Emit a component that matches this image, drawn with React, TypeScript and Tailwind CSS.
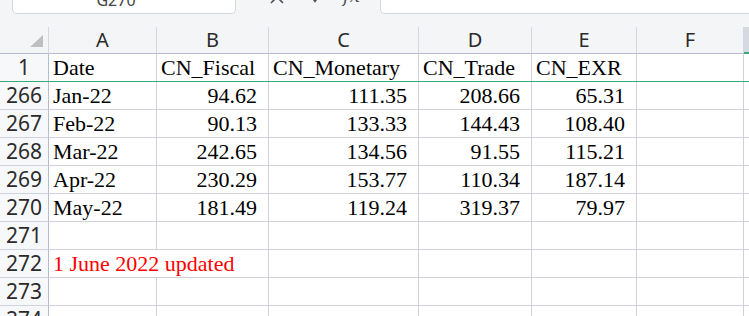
import React from 'react';

const widths = 'grid-cols-[49px_108px_112px_150px_113px_105px_107px_1fr]';

type Row = {
  n: number;
  date?: string;
  values?: string[];
  note?: string;
};

const rows: Row[] = [
  { n: 266, date: 'Jan-22', values: ['94.62', '111.35', '208.66', '65.31'] },
  { n: 267, date: 'Feb-22', values: ['90.13', '133.33', '144.43', '108.40'] },
  { n: 268, date: 'Mar-22', values: ['242.65', '134.56', '91.55', '115.21'] },
  { n: 269, date: 'Apr-22', values: ['230.29', '153.77', '110.34', '187.14'] },
  { n: 270, date: 'May-22', values: ['181.49', '119.24', '319.37', '79.97'] },
  { n: 271 },
  { n: 272, note: '1 June 2022 updated' },
  { n: 273 },
  { n: 274 },
];

const serif = "font-['Liberation_Serif',serif] text-[22px] text-black";
const sans = "font-['Noto_Sans',sans-serif] text-[#2b2b2b]";

function FormulaBar() {
  return (
    <div className="flex h-[27px] items-start overflow-hidden bg-[#f4f5f7]">
      <div className="ml-[12px] flex h-[14px] w-[224px] justify-center overflow-hidden rounded-b-[5px] border-x border-b border-[#d3d6dc] bg-white">
        <span className={`${sans} -mt-[8px] pr-[16px] text-[16px] leading-[16px] text-[#444]`}>G270</span>
      </div>
      <svg className="-mt-[10px] ml-[34px] shrink-0" width="14" height="14" viewBox="0 0 14 14">
        <path d="M1 1 L13 13 M13 1 L1 13" stroke="#4a4f58" strokeWidth="1.6" fill="none" />
      </svg>
      <svg className="-mt-[6px] ml-[27px] shrink-0" width="8" height="9" viewBox="0 0 8 9">
        <path d="M1 3 L4 7 L7 3" stroke="#4a4f58" strokeWidth="2" fill="none" />
      </svg>
      <span className="-mt-[13px] ml-[24px] w-[21px] shrink-0 font-['DejaVu_Serif',serif] text-[18px] italic leading-[18px] text-[#4a4f58]">
        fx
      </span>
      <div className="ml-[16px] h-[14px] flex-1 rounded-bl-[5px] border-b border-l border-[#d3d6dc] bg-white" />
    </div>
  );
}

function HeaderRow() {
  const letters = ['A', 'B', 'C', 'D', 'E', 'F'];
  return (
    <div className={`grid ${widths} h-[27px] bg-[#f4f5f7]`}>
      <div className="flex items-end justify-end border-r border-b border-r-[#d3d7df] border-b-[#b5bccb] pr-[5px] pb-[6px]">
        <svg width="13" height="12" viewBox="0 0 13 12">
          <path d="M13 0 L13 12 L0 12 Z" fill="#bfbfbf" />
        </svg>
      </div>
      {letters.map((l) => (
        <div
          key={l}
          className={`${sans} border-r border-b border-r-[#d3d7df] border-b-[#b5bccb] text-center text-[20px] leading-[26px]`}
        >
          {l}
        </div>
      ))}
      <div className="border-b-2 border-[#3aa878] bg-[#d6d9df]" />
    </div>
  );
}

function FirstRow() {
  const heads = ['Date', 'CN_Fiscal', 'CN_Monetary', 'CN_Trade', 'CN_EXR', ''];
  return (
    <div className={`grid ${widths} h-[28px] border-b border-[#3aa878]`}>
      <div className={`${sans} border-r border-[#b5bccb] bg-[#f7f8fa] text-center text-[21px] leading-[27px]`}>1</div>
      {heads.map((h, i) => (
        <div key={i} className={`${serif} border-r border-[#cdd2de] pl-[4px] leading-[27px] whitespace-nowrap`}>
          {h}
        </div>
      ))}
      <div />
    </div>
  );
}

function DataRow({ row }: { row: Row }) {
  return (
    <div className={`grid ${widths} h-[28px]`}>
      <div className={`${sans} border-r border-b border-r-[#b5bccb] border-b-[#cdd2de] bg-[#f7f8fa] text-center text-[21px] leading-[27px]`}>
        {row.n}
      </div>
      {row.note ? (
        <div className="border-b border-[#cdd2de] pl-[4px] font-['Liberation_Serif',serif] text-[22px] leading-[27px] whitespace-nowrap text-[#ff0000]">
          {row.note}
        </div>
      ) : (
        <div className={`${serif} border-r border-b border-[#cdd2de] pl-[4px] leading-[27px]`}>{row.date}</div>
      )}
      {[0, 1, 2, 3].map((i) => (
        <div key={i} className={`${serif} border-r border-b border-[#cdd2de] pr-[11px] text-right leading-[27px]`}>
          {row.values ? row.values[i] : ''}
        </div>
      ))}
      <div className="border-r border-b border-[#cdd2de]" />
      <div className="border-b border-[#cdd2de]" />
    </div>
  );
}

export default function App() {
  return (
    <div className="h-[316px] w-[749px] overflow-hidden bg-white">
      <FormulaBar />
      <HeaderRow />
      <FirstRow />
      {rows.map((r) => (
        <DataRow key={r.n} row={r} />
      ))}
    </div>
  );
}
